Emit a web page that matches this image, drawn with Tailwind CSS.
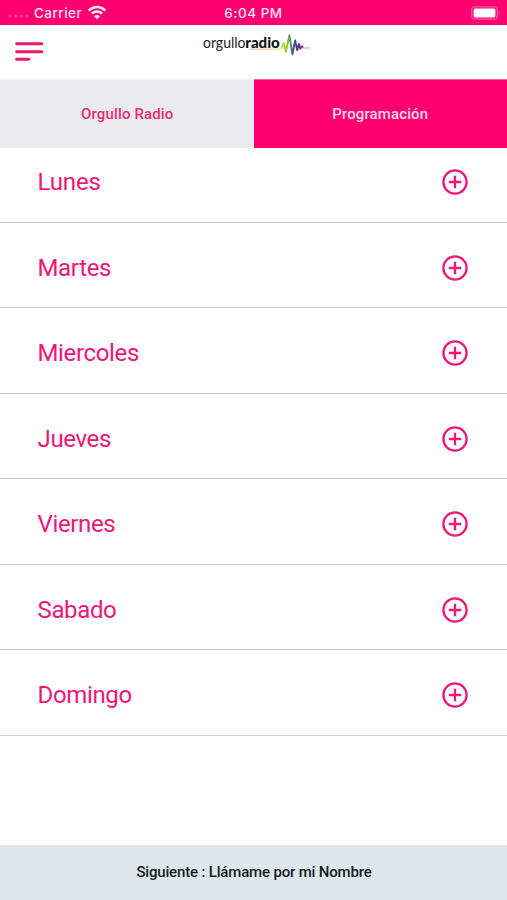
<!DOCTYPE html>
<html lang="es">
<head>
<meta charset="utf-8">
<title>Orgullo Radio</title>
<script src="https://cdn.jsdelivr.net/npm/@tailwindcss/browser@4"></script>
</head>
<body class="bg-white">
<svg class="hidden"><symbol id="plus" viewBox="0 0 26 26"><g fill="none" stroke="#f01678" stroke-width="2.3"><circle cx="13" cy="13" r="11.6"/><path d="M13 6.8v12.4M6.8 13h12.4"/></g></symbol></svg>
<div class="flex h-[900px] w-[507px] flex-col overflow-hidden font-['Roboto',sans-serif]">
  <header>
    <div class="grid h-[25px] grid-cols-3 items-center bg-[#ff0070] font-['Inter',sans-serif] text-[13.5px] text-[#ffe3f0]">
      <div class="flex items-center pl-2">
        <svg class="h-4 w-[22px]" viewBox="0 0 22 16" fill="#ff4595"><circle cx="2" cy="11" r="1.5"/><circle cx="7.7" cy="11" r="1.5"/><circle cx="13.4" cy="11" r="1.5"/><circle cx="19.1" cy="11" r="1.5"/></svg>
        <span class="mt-px ml-1 font-medium tracking-[0.45px]">Carrier</span>
        <svg class="ml-[5px] h-[15px] w-5" viewBox="0 0 20 15" fill="none" stroke="#ffeaf4" stroke-width="2.5"><path d="M1.7 5.5C6.3.9 13.7.9 18.3 5.5M4.9 8.7c2.8-2.8 7.4-2.8 10.2 0"/><path d="M10 14.3 7 11.2c1.8-1.5 4.2-1.5 6 0z" fill="#ffeaf4" stroke="none"/></svg>
      </div>
      <div class="mt-px text-center font-medium tracking-[0.5px]">6:04 PM</div>
      <div class="flex justify-end pr-[6px]">
        <svg class="h-[14px] w-[30px]" viewBox="0 0 30 14"><rect x=".8" y=".8" width="25.4" height="12.4" rx="3" fill="none" stroke="#ff5aa1" stroke-width="1.2"/><rect x="2.6" y="2.6" width="21.8" height="8.8" rx="1.6" fill="#fff"/><path d="M27.7 4.7q2 2.3 0 4.6z" fill="#ff5aa1"/></svg>
      </div>
    </div>
    <div class="grid h-[54px] grid-cols-3 items-start">
      <svg class="mt-4 ml-[15px] h-5 w-[29px]" viewBox="0 0 29 20" fill="none" stroke="#ed1870" stroke-width="2.9" stroke-linecap="round"><path d="M1.6 2.7h25.2M1.6 10.7h25.2M1.6 18.3h12.2"/></svg>
      <svg class="mt-1 h-8 w-[176px] justify-self-center overflow-visible" viewBox="166 29 176 32">
        <defs><linearGradient id="wave" gradientUnits="userSpaceOnUse" x1="280" x2="310" y1="0" y2="0"><stop offset="0" stop-color="#d6db35"/><stop offset=".2" stop-color="#a3cb3c"/><stop offset=".33" stop-color="#5aa648"/><stop offset=".43" stop-color="#3d5b83"/><stop offset=".62" stop-color="#55328c"/><stop offset=".75" stop-color="#a53c83"/><stop offset="1" stop-color="#d85b91"/></linearGradient>
        <linearGradient id="line" x1="0" x2="1"><stop stop-color="#f2a08f"/><stop offset="1" stop-color="#fbdc62"/></linearGradient></defs>
        <rect x="250" y="48.6" width="31" height="1" fill="url(#line)"/>
        <text x="203" y="48" font-family="Lato, sans-serif" font-size="15" fill="#222" textLength="42.5" lengthAdjust="spacingAndGlyphs">orgullo</text>
        <text x="245.3" y="48" font-family="Lato, sans-serif" font-weight="900" font-size="14.5" fill="#111" textLength="34.5" lengthAdjust="spacingAndGlyphs">radio</text>
        <path d="M280.8 47.8h.8l2-4.8 2.2 8.8 3.6-16.6 3 19.2 2.8-14 2 9.8 1.8-6.2 1.4 4.8 1.5-2.5 1.3 1.3" fill="none" stroke="url(#wave)" stroke-width="1.9" stroke-linejoin="round"/>
        <path d="M302.8 47.6h6.6v.8h-6.6z" fill="#d85b91"/>
      </svg>
    </div>
  </header>
  <nav class="grid h-[69px] grid-cols-2 text-center text-[15px] leading-[68px] font-medium">
    <div class="border-t border-[#f3f3f4] bg-[#ebebed] pl-px tracking-[0.15px] text-[#e92a7b]">Orgullo Radio</div>
    <div class="border-t border-[#ff5ca3] bg-[#ff0070] tracking-[0.12px] text-[#ffdcec]">Programación</div>
  </nav>
  <main class="flex-1 text-2xl tracking-[-0.35px] text-[#f01678]">
    <div class="flex h-[74.5px] items-end justify-between border-b border-[#c9c9c9] pr-[39px] pb-[26.3px] pl-[37.5px]"><span class="leading-[26px] tracking-[-0.15px]">Lunes</span><svg class="size-[26px]"><use href="#plus"/></svg></div>
    <div class="flex h-[85.5px] items-end justify-between border-b border-[#c9c9c9] pr-[39px] pb-[26.3px] pl-[37.5px]"><span class="leading-[26px]">Martes</span><svg class="size-[26px]"><use href="#plus"/></svg></div>
    <div class="flex h-[85.5px] items-end justify-between border-b border-[#c9c9c9] pr-[39px] pb-[26.3px] pl-[37.5px]"><span class="leading-[26px]">Miercoles</span><svg class="size-[26px]"><use href="#plus"/></svg></div>
    <div class="flex h-[85.5px] items-end justify-between border-b border-[#c9c9c9] pr-[39px] pb-[26.3px] pl-[37.5px]"><span class="leading-[26px]">Jueves</span><svg class="size-[26px]"><use href="#plus"/></svg></div>
    <div class="flex h-[85.5px] items-end justify-between border-b border-[#c9c9c9] pr-[39px] pb-[26.3px] pl-[37.5px]"><span class="leading-[26px]">Viernes</span><svg class="size-[26px]"><use href="#plus"/></svg></div>
    <div class="flex h-[85.5px] items-end justify-between border-b border-[#c9c9c9] pr-[39px] pb-[26.3px] pl-[37.5px]"><span class="leading-[26px]">Sabado</span><svg class="size-[26px]"><use href="#plus"/></svg></div>
    <div class="flex h-[85.5px] items-end justify-between border-b border-[#c9c9c9] pr-[39px] pb-[26.3px] pl-[37.5px]"><span class="leading-[26px]">Domingo</span><svg class="size-[26px]"><use href="#plus"/></svg></div>
  </main>
  <footer class="h-[55px] bg-[#dde7ec] pl-px text-center text-[15px] leading-[55px] font-medium tracking-[-0.17px] text-[#121b20]">Siguiente : Llámame por mi Nombre</footer>
</div>
</body>
</html>
